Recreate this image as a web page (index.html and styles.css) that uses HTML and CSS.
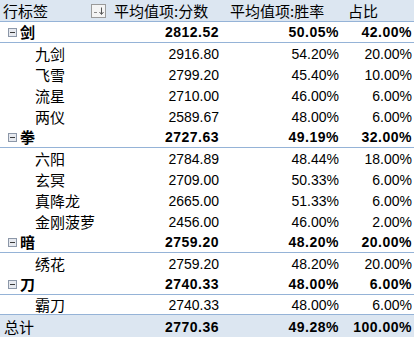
FILE: index.html
```html
<!DOCTYPE html>
<html lang="zh">
<head>
<meta charset="utf-8">
<link rel="stylesheet" href="styles.css">
</head>
<body>
<div class="pivot">
  <div class="row head">
    <div class="c1 hcell"><span>行标签</span><span class="filter"><svg width="15" height="14" viewBox="0 0 15 14"><rect x="0.5" y="0.5" width="14" height="13" fill="#f4f4f4" stroke="#9a9a9a"/><path d="M3 8.5h3" stroke="#8a8a8a" stroke-width="1"/><path d="M10.5 3.5v6.5" stroke="#555" stroke-width="1"/><path d="M8.5 8l2 2.5 2-2.5" fill="none" stroke="#555" stroke-width="1"/></svg></span></div>
    <div class="c2 hcell">平均值项:分数</div>
    <div class="c3 hcell">平均值项:胜率</div>
    <div class="c4 hcell">占比</div>
  </div>

  <div class="row group">
    <div class="c1"><span class="tog"></span>剑</div>
    <div class="c2">2812.52</div><div class="c3">50.05%</div><div class="c4">42.00%</div>
  </div>
  <div class="row child"><div class="c1">九剑</div><div class="c2">2916.80</div><div class="c3">54.20%</div><div class="c4">20.00%</div></div>
  <div class="row child"><div class="c1">飞雪</div><div class="c2">2799.20</div><div class="c3">45.40%</div><div class="c4">10.00%</div></div>
  <div class="row child"><div class="c1">流星</div><div class="c2">2710.00</div><div class="c3">46.00%</div><div class="c4">6.00%</div></div>
  <div class="row child"><div class="c1">两仪</div><div class="c2">2589.67</div><div class="c3">48.00%</div><div class="c4">6.00%</div></div>

  <div class="row group">
    <div class="c1"><span class="tog"></span>拳</div>
    <div class="c2">2727.63</div><div class="c3">49.19%</div><div class="c4">32.00%</div>
  </div>
  <div class="row child"><div class="c1">六阳</div><div class="c2">2784.89</div><div class="c3">48.44%</div><div class="c4">18.00%</div></div>
  <div class="row child"><div class="c1">玄冥</div><div class="c2">2709.00</div><div class="c3">50.33%</div><div class="c4">6.00%</div></div>
  <div class="row child"><div class="c1">真降龙</div><div class="c2">2665.00</div><div class="c3">51.33%</div><div class="c4">6.00%</div></div>
  <div class="row child"><div class="c1">金刚菠萝</div><div class="c2">2456.00</div><div class="c3">46.00%</div><div class="c4">2.00%</div></div>

  <div class="row group">
    <div class="c1"><span class="tog"></span>暗</div>
    <div class="c2">2759.20</div><div class="c3">48.20%</div><div class="c4">20.00%</div>
  </div>
  <div class="row child"><div class="c1">绣花</div><div class="c2">2759.20</div><div class="c3">48.20%</div><div class="c4">20.00%</div></div>

  <div class="row group">
    <div class="c1"><span class="tog"></span>刀</div>
    <div class="c2">2740.33</div><div class="c3">48.00%</div><div class="c4">6.00%</div>
  </div>
  <div class="row child last"><div class="c1">霸刀</div><div class="c2">2740.33</div><div class="c3">48.00%</div><div class="c4">6.00%</div></div>

  <div class="row total">
    <div class="c1">总计</div>
    <div class="c2">2770.36</div><div class="c3">49.28%</div><div class="c4">100.00%</div>
  </div>
</div>
</body>
</html>
```
FILE: styles.css
```css
html, body {
  margin: 0;
  padding: 0;
  background: #ffffff;
}
body {
  width: 414px;
  height: 337px;
  overflow: hidden;
  font-family: "Liberation Sans", "Noto Sans CJK SC", sans-serif;
  font-size: 14px;
  color: #000;
}
.pivot {
  display: flex;
  flex-direction: column;
}
.row {
  display: grid;
  grid-template-columns: 111px 112px 119px 72px;
  height: 21px;
  align-items: center;
  box-sizing: border-box;
}
.row > div {
  white-space: nowrap;
  line-height: 20px;
}
.c2, .c3 { text-align: right; }
.c4 { text-align: right; padding-right: 2px; }
.c2 { padding-right: 4px; }
.c3 { padding-right: 3px; }

.head {
  height: 22px;
  background: #dce6f1;
  border-bottom: 1px solid #95b3d7;
  font-family: "Noto Sans CJK SC", "Liberation Sans", sans-serif;
  font-size: 15px;
}
.head .hcell { text-align: left; line-height: 21px; }
.head .c1 { padding-left: 3px; display: flex; align-items: center; }
.head .c1 span:first-child { width: 88px; }
.filter { display: flex; margin-top: 1px; }
.head .c2 { padding-left: 3px; padding-right: 0; }
.head .c3 { padding-left: 7px; padding-right: 0; }
.head .c4 { padding-left: 6px; }

.group {
  font-weight: bold;
  border-bottom: 1px solid #95b3d7;
}
.group .c1 {
  display: flex;
  align-items: center;
  font-family: "Noto Sans CJK SC", sans-serif;
  font-size: 15px;
  padding-left: 8px;
}
.group .c2, .group .c3, .group .c4 { letter-spacing: 0.5px; }
.tog {
  width: 7px;
  height: 7px;
  border: 1px solid #8c97a8;
  background: #e6e9ef;
  margin-right: 3px;
  position: relative;
  flex: none;
}
.tog::after {
  content: "";
  position: absolute;
  left: 1px;
  top: 3px;
  width: 5px;
  height: 1px;
  background: #3a3a3a;
}
.child .c1 {
  padding-left: 35px;
  font-family: "Noto Sans CJK SC", sans-serif;
  font-size: 15px;
}
.child.last { height: 19px; }
.total {
  height: 24px;
  background: #dce6f1;
  border-top: 1px solid #95b3d7;
  font-weight: bold;
}
.total .c1 {
  padding-left: 4px;
  font-weight: normal;
  font-family: "Noto Sans CJK SC", sans-serif;
  font-size: 15px;
}
.total .c2, .total .c3, .total .c4 { letter-spacing: 0.5px; }
```
